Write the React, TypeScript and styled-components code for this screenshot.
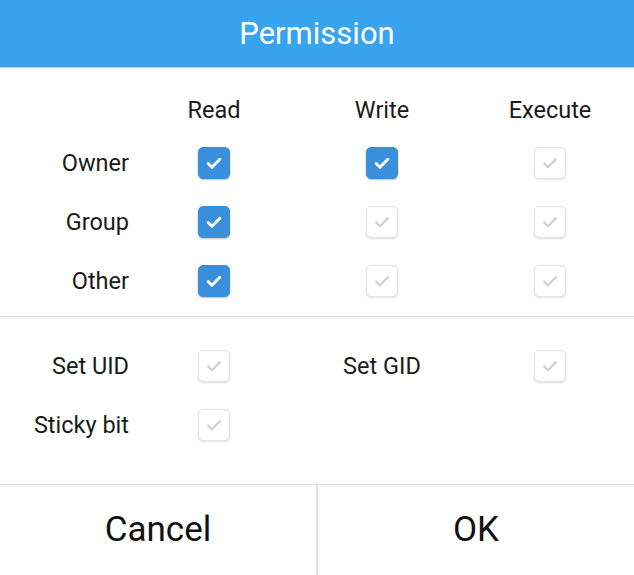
import { Fragment } from 'react';
import styled, { createGlobalStyle } from 'styled-components';

const GlobalStyle = createGlobalStyle`
  body {
    margin: 0;
    background: #fff;
    font-family: Roboto, 'Noto Sans', sans-serif;
  }
`;

const Dialog = styled.div`
  width: 634px;
  height: 575px;
  display: flex;
  flex-direction: column;
  background: #fff;
  overflow: hidden;
`;

const Header = styled.div`
  height: 68px;
  flex-shrink: 0;
  background: #38a4ef;
  color: #fff;
  font-size: 31px;
  display: flex;
  align-items: center;
  justify-content: center;
  border-bottom: 1px solid #a5d4f7;
  box-sizing: border-box;
`;

const Section = styled.div<{ $top: number; $bottom: number }>`
  display: grid;
  grid-template-columns: 130px repeat(3, 1fr);
  grid-auto-rows: 59px;
  padding: ${(p) => p.$top}px 0 ${(p) => p.$bottom}px;
`;

const Divider = styled.div`
  height: 1px;
  background: #dcdcdc;
`;

const ColHead = styled.div`
  font-size: 23.5px;
  color: #1a1a1a;
  display: flex;
  align-items: center;
  justify-content: center;
  height: 47px;
  align-self: end;
`;

const Label = styled.div<{ $center?: boolean }>`
  font-size: 23.5px;
  color: #1a1a1a;
  display: flex;
  align-items: center;
  justify-content: ${(p) => (p.$center ? 'center' : 'flex-end')};
  white-space: nowrap;
  padding-right: ${(p) => (p.$center ? 0 : 1)}px;
`;

const Cell = styled.div`
  display: flex;
  align-items: center;
  justify-content: center;
`;

const Box = styled.div<{ $on: boolean }>`
  width: 32px;
  height: 32px;
  box-sizing: border-box;
  border-radius: 5px;
  display: flex;
  align-items: center;
  justify-content: center;
  background: ${(p) => (p.$on ? '#3a8fdc' : '#fff')};
  border: 1px solid ${(p) => (p.$on ? '#3a8fdc' : '#e2e2e2')};
  box-shadow: 0 1px 2px rgba(0, 0, 0, ${(p) => (p.$on ? 0.25 : 0.12)});
  color: ${(p) => (p.$on ? '#fff' : '#cfcfcf')};
`;

const Footer = styled.div`
  flex: 1;
  display: flex;
  border-top: 1px solid #dcdcdc;
`;

const Button = styled.div`
  flex: 1;
  display: flex;
  align-items: center;
  justify-content: center;
  font-size: 35px;
  color: #111;
  padding-bottom: 2px;
`;

const ButtonSplit = styled.div`
  width: 2px;
  background: #dedede;
`;

function Check({ on }: { on: boolean }) {
  return (
    <Box $on={on}>
      <svg width='20' height='20' viewBox='0 0 24 24' fill='none'>
        <path d='M5 12.5l4.5 4.5L19 7.5' stroke='currentColor' strokeWidth={on ? 3.4 : 2.6} strokeLinecap='round' strokeLinejoin='round' />
      </svg>
    </Box>
  );
}

const rows: [string, boolean, boolean, boolean][] = [
  ['Owner', true, true, false],
  ['Group', true, false, false],
  ['Other', true, false, false],
];

export default function App() {
  return (
    <Dialog>
      <GlobalStyle />
      <Header>Permission</Header>
      <Section $top={18} $bottom={6} style={{ gridTemplateRows: '47px' }}>
        <div />
        <ColHead>Read</ColHead>
        <ColHead>Write</ColHead>
        <ColHead>Execute</ColHead>
        {rows.map(([name, r, w, x]) => (
          <Fragment key={name}>
            <Label>{name}</Label>
            <Cell><Check on={r} /></Cell>
            <Cell><Check on={w} /></Cell>
            <Cell><Check on={x} /></Cell>
          </Fragment>
        ))}
      </Section>
      <Divider />
      <Section $top={19} $bottom={30}>
        <Label>Set UID</Label>
        <Cell><Check on={false} /></Cell>
        <Label $center>Set GID</Label>
        <Cell><Check on={false} /></Cell>
        <Label>Sticky bit</Label>
        <Cell><Check on={false} /></Cell>
      </Section>
      <Footer>
        <Button>Cancel</Button>
        <ButtonSplit />
        <Button>OK</Button>
      </Footer>
    </Dialog>
  );
}
